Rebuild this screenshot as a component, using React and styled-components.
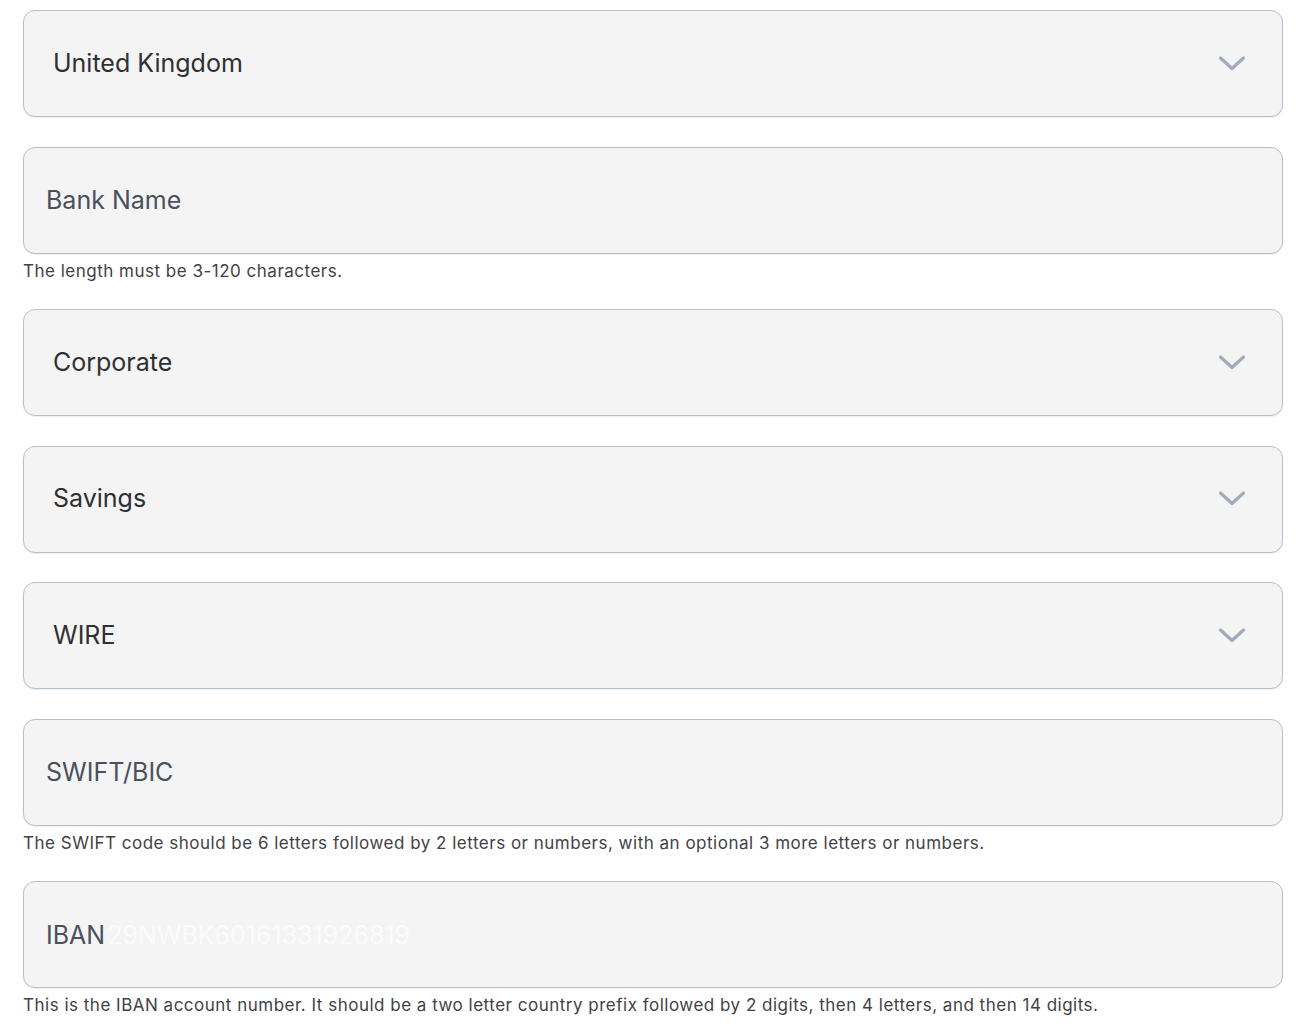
import styled, { createGlobalStyle } from 'styled-components';

const GlobalStyle = createGlobalStyle`
  html, body {
    margin: 0;
    padding: 0;
    background: #ffffff;
  }
  body {
    font-family: Inter, "Noto Sans", "Liberation Sans", sans-serif;
  }
`;

const Form = styled.form`
  display: flex;
  flex-direction: column;
  width: 1260px;
  padding: 10px 0 0 23px;
`;

const Group = styled.div`
  display: flex;
  flex-direction: column;
  margin-bottom: ${(p) => (p.$hint ? '27.5px' : '29.5px')};
`;

const Box = styled.div`
  box-sizing: border-box;
  height: 107px;
  display: flex;
  align-items: center;
  justify-content: space-between;
  background: #f4f4f4;
  border: 1px solid #b7bfcb;
  border-radius: 12px;
  box-shadow: 0 1px 1px rgba(60, 70, 90, 0.08);
  padding: ${(p) => (p.$select ? '0 36px 0 29px' : '0 22px')};
`;

const Value = styled.span`
  font-size: 25px;
  color: #2f3033;
  padding-bottom: 2px;
`;

const Label = styled.span`
  font-size: 25px;
  color: #4b505c;
`;

const Placeholder = styled.span`
  font-size: 25px;
  color: #fbfbfb;
  margin-left: 2px;
`;

const Hint = styled.p`
  margin: 6px 0 0;
  font-size: 17px;
  line-height: 22px;
  color: #3f4246;
  letter-spacing: 0.5px;
`;

const Chevron = () => (
  <svg width="28" height="18" viewBox="0 0 28 18" fill="none">
    <path
      d="M2.5 3 L14 13.5 L25.5 3"
      stroke="#a1abbb"
      strokeWidth="3.2"
      strokeLinecap="round"
      strokeLinejoin="round"
    />
  </svg>
);

const SelectField = ({ value }) => (
  <Group>
    <Box $select>
      <Value>{value}</Value>
      <Chevron />
    </Box>
  </Group>
);

const TextField = ({ label, placeholder, hint }) => (
  <Group $hint={!!hint}>
    <Box>
      <div>
        <Label>{label}</Label>
        {placeholder && <Placeholder>{placeholder}</Placeholder>}
      </div>
    </Box>
    {hint && <Hint>{hint}</Hint>}
  </Group>
);

export default function App() {
  return (
    <>
      <GlobalStyle />
      <Form>
        <SelectField value="United Kingdom" />
        <TextField label="Bank Name" hint="The length must be 3-120 characters." />
        <SelectField value="Corporate" />
        <SelectField value="Savings" />
        <SelectField value="WIRE" />
        <TextField
          label="SWIFT/BIC"
          hint="The SWIFT code should be 6 letters followed by 2 letters or numbers, with an optional 3 more letters or numbers."
        />
        <TextField
          label="IBAN"
          placeholder="29NWBK60161331926819"
          hint="This is the IBAN account number. It should be a two letter country prefix followed by 2 digits, then 4 letters, and then 14 digits."
        />
      </Form>
    </>
  );
}
